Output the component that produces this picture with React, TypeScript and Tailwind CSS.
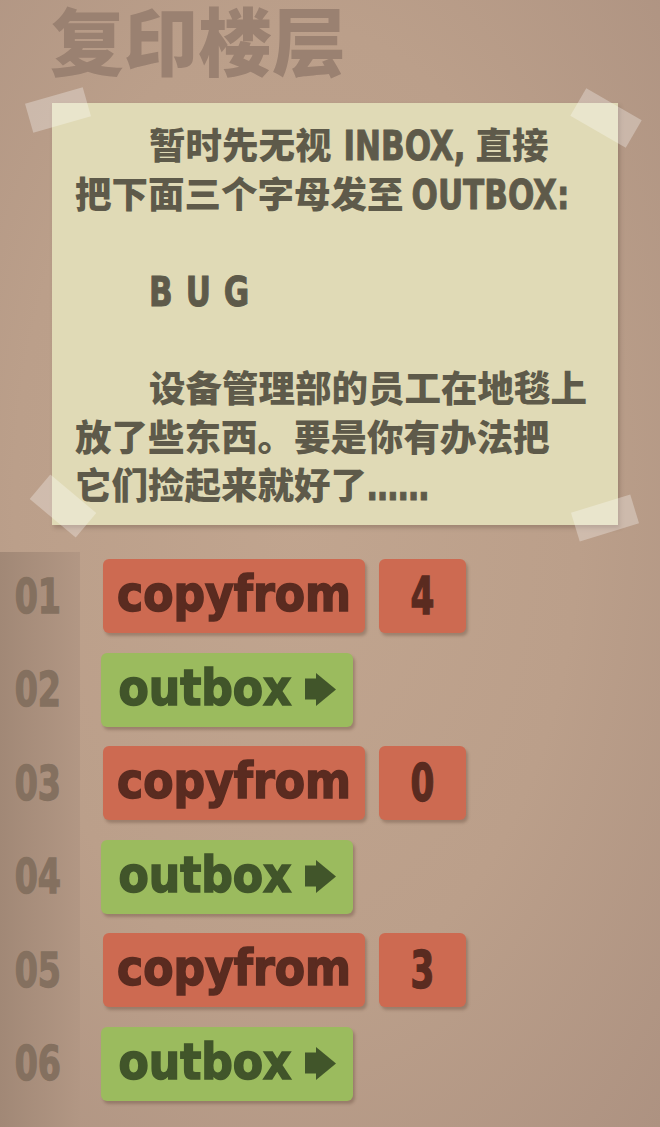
const cjk = "font-['Noto_Sans_CJK_SC',sans-serif]";
const lat = "font-['DejaVu_Sans_Condensed','DejaVu_Sans',sans-serif] font-stretch-condensed";

const Latin = ({ children, className = "" }: { children: React.ReactNode; className?: string }) => (
  <span className={`${lat} inline-block font-bold text-[34.5px] leading-none scale-y-[1.2] origin-[50%_75%] [-webkit-text-stroke:0.8px_#5e5a4a] ${className}`}>
    {children}
  </span>
);

const Tape = ({ className }: { className: string }) => (
  <div className={`absolute bg-white/30 ${className}`} />
);

const Arrow = () => (
  <svg width="31" height="33" viewBox="0 0 31 33" className="ml-[13px] shrink-0">
    <rect x="0" y="5.5" width="13" height="21" fill="#41552a" />
    <polygon points="11,0 31,16.5 11,33" fill="#41552a" />
  </svg>
);

const CopyFrom = ({ arg }: { arg: string }) => (
  <div className="flex h-[74px] gap-[14px]">
    <div className="flex w-[262px] items-center justify-center rounded-[6px] bg-[#cd6a51] shadow-[2px_3px_3px_rgba(60,30,20,0.25)]">
      <span className={`${lat} -mt-[3px] text-[49px] font-bold leading-none text-[#5a2b20] [-webkit-text-stroke:1.5px_#5a2b20]`}>copyfrom</span>
    </div>
    <div className="flex w-[87px] items-center justify-center rounded-[6px] bg-[#cd6a51] shadow-[2px_3px_3px_rgba(60,30,20,0.25)]">
      <span className={`${lat} inline-block scale-y-[1.37] text-[38px] font-bold leading-none text-[#5a2b20] [-webkit-text-stroke:1px_#5a2b20]`}>{arg}</span>
    </div>
  </div>
);

const Outbox = () => (
  <div className="flex h-[74px]">
    <div className="-ml-[2px] flex w-[252px] items-center justify-center rounded-[6px] bg-[#9bbb5e] shadow-[2px_3px_3px_rgba(60,30,20,0.25)]">
      <span className={`${lat} -mt-[3px] text-[49px] font-bold leading-none text-[#41552a] [-webkit-text-stroke:1.5px_#41552a]`}>outbox</span>
      <Arrow />
    </div>
  </div>
);

const rows = [
  <CopyFrom arg="4" />,
  <Outbox />,
  <CopyFrom arg="0" />,
  <Outbox />,
  <CopyFrom arg="3" />,
  <Outbox />,
];

export default function App() {
  return (
    <div className="relative flex h-[1127px] w-[660px] flex-col overflow-hidden bg-[radial-gradient(ellipse_at_45%_45%,#c1a58f_0%,#bb9f8a_55%,#ad9281_100%)]">
      <div className="h-[103px] pl-[50px]">
        <h1 className={`${cjk} text-[74px] font-black leading-[76px] text-[#9a8171]`}>复印楼层</h1>
      </div>

      <div className="relative ml-[52px] h-[422px] w-[566px] bg-[#e0dab6] pl-[23px] pt-[17px] shadow-[2px_3px_4px_rgba(70,50,40,0.25)]">
        <Tape className="-left-[24px] -top-[8px] h-[30px] w-[60px] -rotate-[16deg]" />
        <Tape className="left-[522px] -top-[1px] h-[32px] w-[64px] rotate-[30deg]" />
        <Tape className="-left-[19px] top-[387px] h-[32px] w-[60px] rotate-[40deg]" />
        <Tape className="left-[522px] top-[400px] h-[30px] w-[62px] -rotate-[17deg]" />

        <div className={`${cjk} whitespace-nowrap text-[36.5px] font-black leading-[48.6px] text-[#5e5a4a]`}>
          <div className="pl-[74px]">
            暂时先无视<span className="inline-block w-[12px]" /><Latin>INBOX,</Latin><span className="inline-block w-[10px]" />直接
          </div>
          <div>
            把下面三个字母发至<span className="inline-block w-[8px]" /><Latin>OUTBOX:</Latin>
          </div>
          <div className="h-[48.6px]" />
          <div className="pl-[74px]">
            <Latin className="tracking-[13px]">BUG</Latin>
          </div>
          <div className="h-[48.6px]" />
          <div className="pl-[74px]">设备管理部的员工在地毯上</div>
          <div>放了些东西。要是你有办法把</div>
          <div>
            它们捡起来就好了<Latin className="scale-y-100">……</Latin>
          </div>
        </div>
      </div>

      <div className="mt-[27px] flex flex-1">
        <div className="flex w-[80px] flex-col gap-[19.6px] bg-gradient-to-r from-[#a18876] to-[#b29784] pt-[7px]">
          {["01", "02", "03", "04", "05", "06"].map((n) => (
            <div key={n} className="flex h-[74px] items-center justify-end pr-[19px]">
              <span className={`${lat} inline-block scale-y-[1.32] text-[37px] font-bold leading-none text-[#84705f] [-webkit-text-stroke:1px_#84705f]`}>{n}</span>
            </div>
          ))}
        </div>
        <div className="flex flex-col gap-[19.6px] pl-[23px] pt-[7px]">
          {rows.map((r, i) => (
            <div key={i}>{r}</div>
          ))}
        </div>
      </div>
    </div>
  );
}
